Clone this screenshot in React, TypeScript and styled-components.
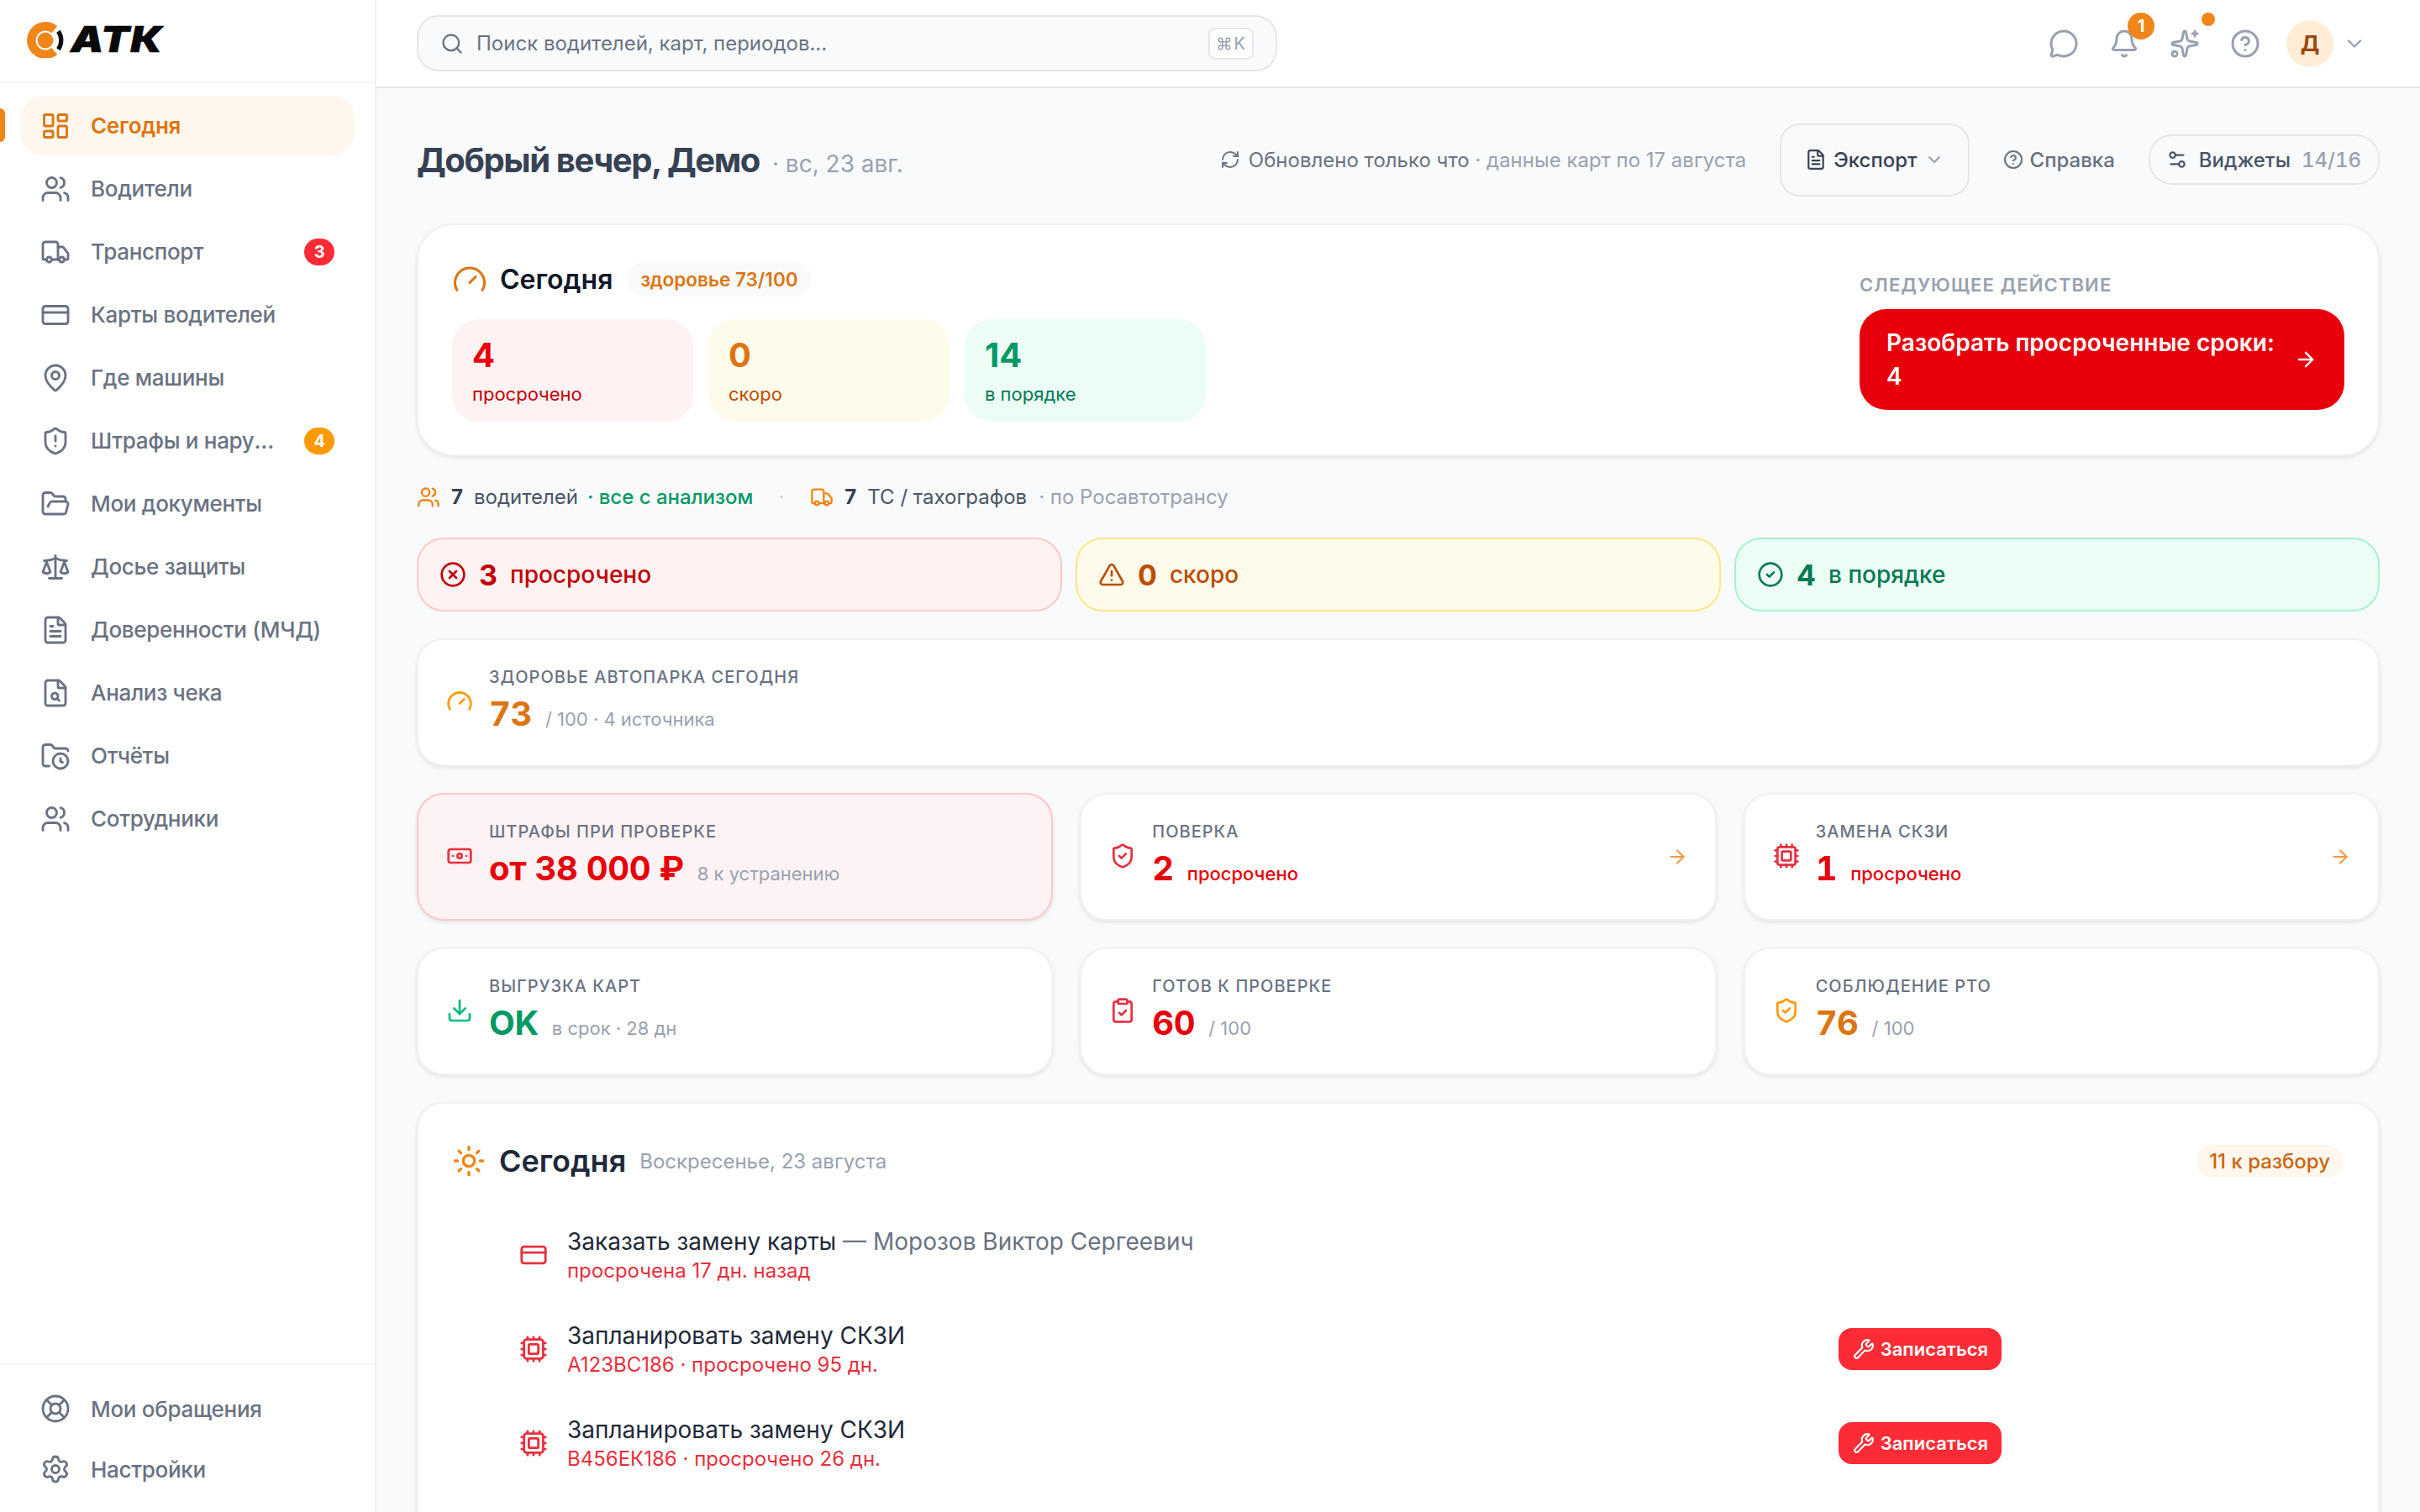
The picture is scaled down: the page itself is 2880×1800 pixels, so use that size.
import React from 'react';
import styled, { createGlobalStyle } from 'styled-components';
import {
  ArrowRight,
  Banknote,
  Bell,
  ChevronDown,
  CircleCheck,
  CircleHelp,
  CircleX,
  ClipboardCheck,
  Command,
  Cpu,
  CreditCard,
  Download,
  FileSearch,
  FileText,
  FolderClock,
  FolderOpen,
  Gauge,
  LayoutDashboard,
  LifeBuoy,
  MapPin,
  MessageCircle,
  RefreshCw,
  Scale,
  Search,
  Settings,
  Settings2,
  ShieldAlert,
  ShieldCheck,
  Sparkles,
  Sun,
  TriangleAlert,
  Truck,
  Users,
  Wrench,
} from 'lucide-react';

const GlobalStyle = createGlobalStyle`
  * { box-sizing: border-box; }
  html, body { margin: 0; height: 100%; overflow: hidden; }
  body { font-family: Inter, "Liberation Sans", sans-serif; background: #f9fafb; color: #101828; }
  #root { height: 100%; }
`;

const Shell = styled.div`
  display: flex;
  height: 1800px;
  overflow: hidden;
`;

const Sidebar = styled.aside`
  flex: 0 0 448px;
  width: 448px;
  min-width: 0;
  display: flex;
  flex-direction: column;
  background: #fff;
  border-right: 2px solid #eceef1;
`;

const LogoRow = styled.div`
  height: 99px;
  display: flex;
  align-items: center;
  gap: 8px;
  padding: 0 0 3px 32px;
  border-bottom: 2px solid #f5f6f7;
`;

const LogoText = styled.span`
  font-family: Inter, sans-serif;
  font-size: 42px;
  line-height: 1;
  font-weight: 900;
  font-style: italic;
  color: #0a0a0a;
  letter-spacing: 1px;
  transform: scaleX(1.18);
  transform-origin: left center;
  -webkit-text-stroke: 0.6px #0a0a0a;
`;

const Nav = styled.nav`
  display: flex;
  flex-direction: column;
  gap: 4px;
  padding: 15px 24px 0;
`;

const NavItem = styled.div<{ $active?: boolean }>`
  position: relative;
  height: 71px;
  display: flex;
  align-items: center;
  gap: 24px;
  padding: 0 24px;
  border-radius: 28px;
  font-size: 26px;
  letter-spacing: -0.3px;
  font-weight: ${(p) => (p.$active ? 600 : 500)};
  color: ${(p) => (p.$active ? '#dc7512' : '#6a7282')};
  background: ${(p) => (p.$active ? '#fef7ed' : 'transparent')};
  svg { flex: 0 0 36px; }
`;

const ActiveMark = styled.span`
  position: absolute;
  left: -24px;
  top: 15px;
  width: 6px;
  height: 40px;
  border-radius: 0 6px 6px 0;
  background: #f08519;
`;

const NavLabel = styled.span`
  flex: 1;
  min-width: 0;
  white-space: nowrap;
  overflow: hidden;
  text-overflow: ellipsis;
`;

const NavBadge = styled.span<{ $tone: 'red' | 'amber' }>`
  flex: 0 0 36px;
  height: 32px;
  border-radius: 16px;
  display: flex;
  align-items: center;
  justify-content: center;
  font-size: 20px;
  font-weight: 700;
  color: #fff;
  background: ${(p) => (p.$tone === 'red' ? '#fb2c36' : '#fe9a00')};
`;

const SideFooter = styled.div`
  margin-top: auto;
  display: flex;
  flex-direction: column;
  gap: 4px;
  padding: 18px 24px 17px;
  border-top: 2px solid #f5f6f7;
`;

const FooterItem = styled(NavItem)`
  height: 68px;
`;

const Column = styled.div`
  flex: 1;
  min-width: 0;
  display: flex;
  flex-direction: column;
`;

const Topbar = styled.header`
  flex: 0 0 105px;
  display: flex;
  align-items: center;
  padding: 0 64px 0 48px;
  background: #fff;
  border-bottom: 2px solid #e5e7eb;
`;

const SearchBox = styled.div`
  width: 1024px;
  height: 67px;
  display: flex;
  align-items: center;
  gap: 15px;
  padding: 0 26px;
  border: 2px solid #e5e7eb;
  border-radius: 26px;
  background: #f9fafb;
  color: #6a7282;
  font-size: 24px;
`;

const SearchHint = styled.span`
  flex: 1;
`;

const Kbd = styled.kbd`
  display: flex;
  align-items: center;
  gap: 3px;
  height: 38px;
  padding: 0 8px;
  border: 2px solid #e5e7eb;
  border-radius: 8px;
  background: #fff;
  color: #99a1af;
  font-family: Inter, sans-serif;
  font-size: 20px;
`;

const TopIcons = styled.div`
  margin-left: auto;
  display: flex;
  align-items: center;
`;

const TopIcon = styled.span`
  position: relative;
  width: 72px;
  height: 56px;
  display: flex;
  align-items: center;
  justify-content: center;
  color: #99a1af;
`;

const CountDot = styled.span`
  position: absolute;
  left: 40px;
  top: -9px;
  width: 32px;
  height: 32px;
  border-radius: 50%;
  display: flex;
  align-items: center;
  justify-content: center;
  background: #f08519;
  color: #fff;
  font-size: 20px;
  font-weight: 700;
`;

const PlainDot = styled.span`
  position: absolute;
  left: 56px;
  top: -9px;
  width: 16px;
  height: 16px;
  border-radius: 50%;
  background: #f08519;
`;

const Avatar = styled.span`
  width: 56px;
  height: 56px;
  margin: 0 11px 0 13px;
  border-radius: 50%;
  display: flex;
  align-items: center;
  justify-content: center;
  background: #ffedd5;
  color: #974a0f;
  font-size: 26px;
  font-weight: 700;
`;

const Content = styled.main`
  flex: 1;
  min-height: 0;
  overflow: hidden;
  display: flex;
  flex-direction: column;
  gap: 32px;
  padding: 42px 48px 0;
  > * { flex: 0 0 auto; }
`;

const PageHead = styled.div`
  height: 86px;
  margin-bottom: 1px;
  display: flex;
  align-items: center;
  gap: 40px;
`;

const Greeting = styled.div`
  margin-right: auto;
  display: flex;
  align-items: baseline;
  gap: 15px;
`;

const Title = styled.h1`
  margin: 0;
  font-size: 40px;
  font-weight: 700;
  color: #364153;
  letter-spacing: -1.4px;
`;

const Muted = styled.span`
  color: #99a1af;
`;

const DateText = styled(Muted)`
  font-size: 28px;
`;

const Updated = styled.div`
  display: flex;
  align-items: center;
  gap: 10px;
  font-size: 24px;
  color: #6a7282;
  white-space: nowrap;
`;

const ExportButton = styled.div`
  height: 87px;
  padding: 0 28px;
  display: flex;
  align-items: center;
  gap: 8px;
  border: 2px solid #e5e7eb;
  border-radius: 24px;
  font-size: 24px;
  font-weight: 500;
  color: #364153;
`;

const HelpLink = styled.div`
  display: flex;
  align-items: center;
  gap: 8px;
  font-size: 24px;
  font-weight: 500;
  color: #6a7282;
`;

const WidgetsButton = styled.div`
  height: 60px;
  padding: 0 20px 0 19px;
  display: flex;
  align-items: center;
  gap: 13px;
  border: 2px solid #e5e7eb;
  border-radius: 28px;
  font-size: 24px;
  font-weight: 500;
  color: #4a5565;
  font-variant-numeric: tabular-nums;
`;

const Card = styled.section<{ $danger?: boolean }>`
  border: 2px solid ${(p) => (p.$danger ? '#ffc9c9' : '#f1f2f4')};
  background: ${(p) => (p.$danger ? '#fdf3f4' : '#fff')};
  border-radius: 32px;
  box-shadow: 0 2px 5px rgba(16, 24, 40, 0.1);
`;

const Hero = styled(Card)`
  height: 277px;
  border-radius: 44px;
  padding: 5px 40px 0;
  display: flex;
  align-items: center;
  justify-content: space-between;
`;

const HeroLeft = styled.div`
  display: flex;
  flex-direction: column;
  gap: 27px;
`;

const HeroHead = styled.div`
  display: flex;
  align-items: center;
  gap: 15px;
  height: 41px;
`;

const HeroTitle = styled.span`
  font-size: 32px;
  font-weight: 600;
  color: #101828;
`;

const HealthPill = styled.span`
  height: 41px;
  padding: 0 16px;
  margin-left: 2px;
  display: flex;
  align-items: center;
  border-radius: 20px;
  background: #f9fafb;
  color: #dc7512;
  font-size: 22.5px;
  font-weight: 600;
`;

const Tiles = styled.div`
  display: flex;
  gap: 18px;
`;

const tileColors = {
  red: { bg: '#fef2f2', num: '#e7000b', text: '#c10007' },
  amber: { bg: '#fffbeb', num: '#dc7512', text: '#bb4d00' },
  green: { bg: '#ecfdf5', num: '#009966', text: '#007a55' },
};

type Tone = keyof typeof tileColors;

const Tile = styled.div<{ $tone: Tone }>`
  width: 287px;
  height: 122px;
  padding: 19px 24px 0;
  border-radius: 32px;
  background: ${(p) => tileColors[p.$tone].bg};
`;

const TileNum = styled.div<{ $tone: Tone }>`
  font-size: 40px;
  line-height: 48px;
  font-weight: 700;
  color: ${(p) => tileColors[p.$tone].num};
`;

const TileLabel = styled.div<{ $tone: Tone }>`
  margin-top: 6px;
  font-size: 22px;
  line-height: 32px;
  color: ${(p) => tileColors[p.$tone].text};
`;

const NextAction = styled.div`
  width: 577px;
  margin-top: -3px;
  display: flex;
  flex-direction: column;
  gap: 14px;
`;

const NextLabel = styled.div`
  font-size: 22px;
  line-height: 30px;
  font-weight: 600;
  color: #99a1af;
  letter-spacing: 1.1px;
`;

const NextButton = styled.div`
  height: 120px;
  padding: 0 32px;
  display: flex;
  align-items: center;
  gap: 16px;
  border-radius: 32px;
  background: #e7000b;
  color: #fff;
  font-size: 28px;
  line-height: 40px;
  font-weight: 600;
`;

const NextText = styled.span`
  flex: 1;
`;

const StatLine = styled.div`
  height: 33px;
  display: flex;
  align-items: center;
  font-size: 24px;
  color: #4a5565;
  white-space: nowrap;
`;

const StatNum = styled.b`
  margin: 0 13px;
  color: #364153;
  font-weight: 700;
`;

const StatGreen = styled.span`
  margin-left: 11px;
  color: #009966;
  font-weight: 500;
`;

const StatMuted = styled(Muted)`
  margin-left: 14px;
`;

const StatSep = styled(Muted)`
  margin: 0 31px 0 30px;
  color: #d1d5dc;
`;

const Alerts = styled.div`
  display: grid;
  grid-template-columns: repeat(3, 1fr);
  gap: 16px;
`;

const alertColors = {
  red: { bg: '#fef2f2', border: '#ffc9c9', text: '#c10007' },
  amber: { bg: '#fffbeb', border: '#fee685', text: '#bb4d00' },
  green: { bg: '#ecfdf5', border: '#a4f4cf', text: '#007a55' },
};

const Alert = styled.div<{ $tone: Tone }>`
  height: 88px;
  padding: 0 25px;
  display: flex;
  align-items: center;
  gap: 15px;
  border: 2px solid ${(p) => alertColors[p.$tone].border};
  border-radius: 32px;
  background: ${(p) => alertColors[p.$tone].bg};
  color: ${(p) => alertColors[p.$tone].text};
  font-size: 28px;
  font-weight: 500;
`;

const AlertNum = styled.b`
  font-size: 34px;
  font-weight: 700;
`;

const MetricCard = styled(Card)`
  height: 152px;
  padding: 29px 32px 0;
  display: flex;
  align-items: flex-start;
  gap: 18px;
`;

const MetricIcon = styled.span<{ $color: string }>`
  flex: 0 0 34px;
  height: 36px;
  margin-top: 26px;
  display: flex;
  align-items: center;
  justify-content: center;
  color: ${(p) => p.$color};
`;

const MetricBody = styled.div`
  flex: 1;
  min-width: 0;
`;

const MetricLabel = styled.div`
  font-size: 20px;
  line-height: 30px;
  font-weight: 500;
  letter-spacing: 1px;
  color: #6a7282;
`;

const MetricValueRow = styled.div`
  margin-top: 6px;
  height: 46px;
  display: flex;
  align-items: baseline;
  gap: 16px;
`;

const MetricValue = styled.span<{ $color: string }>`
  font-size: 40px;
  line-height: 46px;
  font-weight: 700;
  letter-spacing: -0.4px;
  font-variant-numeric: tabular-nums;
  color: ${(p) => p.$color};
`;

const MetricNote = styled.span<{ $color?: string; $bold?: boolean }>`
  font-size: 22px;
  font-weight: ${(p) => (p.$bold ? 500 : 400)};
  color: ${(p) => p.$color || '#99a1af'};
`;

const MetricArrow = styled.span`
  align-self: center;
  margin: -30px 0 0 0;
  color: #f29b47;
  display: flex;
`;

const MetricGrid = styled.div`
  display: grid;
  grid-template-columns: repeat(3, 1fr);
  gap: 32px;
`;

const TodayCard = styled(Card)`
  padding: 44px 42px 200px 40px;
`;

const TodayHead = styled.div`
  height: 48px;
  display: flex;
  align-items: center;
  gap: 16px;
`;

const TodayTitle = styled.span`
  font-size: 36px;
  font-weight: 600;
  color: #1e2939;
`;

const TodayDate = styled(Muted)`
  font-size: 24px;
`;

const ReviewPill = styled.span`
  margin-left: auto;
  height: 39px;
  padding: 0 15px;
  display: flex;
  align-items: center;
  border-radius: 20px;
  background: #fef7ed;
  color: #ca6510;
  font-size: 24px;
  font-weight: 500;
`;

const TaskList = styled.div`
  margin-top: 32px;
  padding: 0 406px 0 80px;
`;

const Task = styled.div`
  height: 112px;
  display: flex;
  align-items: center;
  gap: 23px;
`;

const TaskIcon = styled.span`
  flex: 0 0 32px;
  display: flex;
  justify-content: center;
  color: #e7303e;
`;

const TaskBody = styled.div`
  flex: 1;
`;

const TaskTitle = styled.div`
  font-size: 28px;
  line-height: 38px;
  color: #1e2939;
`;

const TaskWho = styled.span`
  color: #6a7282;
`;

const TaskSub = styled.div`
  margin-top: -1px;
  font-size: 24px;
  line-height: 34px;
  color: #e7303e;
`;

const SignUp = styled.div`
  height: 50px;
  padding: 0 16px 0 17px;
  display: flex;
  align-items: center;
  gap: 7px;
  border-radius: 16px;
  background: #fb2c36;
  color: #fff;
  font-size: 22px;
  font-weight: 600;
`;

const AtkMark = () => (
  <svg width="44" height="44" viewBox="1 -1 42 42" fill="none">
    <path d="M32.3 8.7A16 16 0 1 0 32.3 33.3" stroke="#f08519" strokeWidth="10" />
    <path d="M36.7 10.7A18 18 0 0 1 36.7 31.3" stroke="#0a0a0a" strokeWidth="5" />
    <circle cx="22" cy="21" r="9" fill="#f08519" />
  </svg>
);

const navItems = [
  { icon: LayoutDashboard, label: 'Сегодня', active: true },
  { icon: Users, label: 'Водители' },
  { icon: Truck, label: 'Транспорт', badge: '3', tone: 'red' as const },
  { icon: CreditCard, label: 'Карты водителей' },
  { icon: MapPin, label: 'Где машины' },
  { icon: ShieldAlert, label: 'Штрафы и нарушения', badge: '4', tone: 'amber' as const },
  { icon: FolderOpen, label: 'Мои документы' },
  { icon: Scale, label: 'Досье защиты' },
  { icon: FileText, label: 'Доверенности (МЧД)' },
  { icon: FileSearch, label: 'Анализ чека' },
  { icon: FolderClock, label: 'Отчёты' },
  { icon: Users, label: 'Сотрудники' },
];

const RED = '#e7000b';
const AMBER = '#dc7512';
const GREEN = '#009966';

const metrics = [
  { icon: Banknote, iconColor: '#e7303e', label: 'ШТРАФЫ ПРИ ПРОВЕРКЕ', value: 'от 38 000 ₽', color: RED, note: '8 к устранению', danger: true },
  { icon: ShieldCheck, iconColor: '#e7303e', label: 'ПОВЕРКА', value: '2', color: RED, note: 'просрочено', noteColor: RED, arrow: true },
  { icon: Cpu, iconColor: '#e7303e', label: 'ЗАМЕНА СКЗИ', value: '1', color: RED, note: 'просрочено', noteColor: RED, arrow: true },
  { icon: Download, iconColor: '#00bc7d', label: 'ВЫГРУЗКА КАРТ', value: 'OK', color: GREEN, note: 'в срок · 28 дн' },
  { icon: ClipboardCheck, iconColor: '#e7303e', label: 'ГОТОВ К ПРОВЕРКЕ', value: '60', color: RED, note: '/ 100' },
  { icon: ShieldCheck, iconColor: '#fe9a00', label: 'СОБЛЮДЕНИЕ РТО', value: '76', color: AMBER, note: '/ 100' },
];

const tasks = [
  { icon: CreditCard, title: 'Заказать замену карты', who: ' — Морозов Виктор Сергеевич', sub: 'просрочена 17 дн. назад' },
  { icon: Cpu, title: 'Запланировать замену СКЗИ', sub: 'А123ВС186 · просрочено 95 дн.', action: true },
  { icon: Cpu, title: 'Запланировать замену СКЗИ', sub: 'В456ЕК186 · просрочено 26 дн.', action: true },
];

export default function App() {
  return (
    <Shell>
      <GlobalStyle />
      <Sidebar>
        <LogoRow>
          <AtkMark />
          <LogoText>АТК</LogoText>
        </LogoRow>
        <Nav>
          {navItems.map((item) => (
            <NavItem key={item.label} $active={item.active}>
              {item.active && <ActiveMark />}
              <item.icon size={36} strokeWidth={1.9} />
              <NavLabel>{item.label}</NavLabel>
              {item.badge && <NavBadge $tone={item.tone}>{item.badge}</NavBadge>}
            </NavItem>
          ))}
        </Nav>
        <SideFooter>
          <FooterItem>
            <LifeBuoy size={36} strokeWidth={1.9} />
            <NavLabel>Мои обращения</NavLabel>
          </FooterItem>
          <FooterItem>
            <Settings size={36} strokeWidth={1.9} />
            <NavLabel>Настройки</NavLabel>
          </FooterItem>
        </SideFooter>
      </Sidebar>

      <Column>
        <Topbar>
          <SearchBox>
            <Search size={28} strokeWidth={2} />
            <SearchHint>Поиск водителей, карт, периодов...</SearchHint>
            <Kbd>
              <Command size={18} strokeWidth={2} />K
            </Kbd>
          </SearchBox>
          <TopIcons>
            <TopIcon>
              <MessageCircle size={36} strokeWidth={2} />
            </TopIcon>
            <TopIcon>
              <Bell size={36} strokeWidth={2} />
              <CountDot>1</CountDot>
            </TopIcon>
            <TopIcon>
              <Sparkles size={36} strokeWidth={2} />
              <PlainDot />
            </TopIcon>
            <TopIcon>
              <CircleHelp size={36} strokeWidth={2} />
            </TopIcon>
            <Avatar>Д</Avatar>
            <ChevronDown size={28} color="#99a1af" strokeWidth={2} />
          </TopIcons>
        </Topbar>

        <Content>
          <PageHead>
            <Greeting>
              <Title>Добрый вечер, Демо</Title>
              <DateText>· вс, 23 авг.</DateText>
            </Greeting>
            <Updated>
              <RefreshCw size={24} strokeWidth={2} />
              <span>
                Обновлено только что <Muted>· данные карт по 17 августа</Muted>
              </span>
            </Updated>
            <ExportButton>
              <FileText size={26} strokeWidth={2} />
              Экспорт
              <ChevronDown size={24} color="#99a1af" strokeWidth={2} />
            </ExportButton>
            <HelpLink>
              <CircleHelp size={24} strokeWidth={2} />
              Справка
            </HelpLink>
            <WidgetsButton>
              <Settings2 size={26} strokeWidth={2} />
              Виджеты <Muted>14/16</Muted>
            </WidgetsButton>
          </PageHead>

          <Hero>
            <HeroLeft>
              <HeroHead>
                <Gauge size={42} color="#dc7512" strokeWidth={1.8} />
                <HeroTitle>Сегодня</HeroTitle>
                <HealthPill>здоровье 73/100</HealthPill>
              </HeroHead>
              <Tiles>
                <Tile $tone="red">
                  <TileNum $tone="red">4</TileNum>
                  <TileLabel $tone="red">просрочено</TileLabel>
                </Tile>
                <Tile $tone="amber">
                  <TileNum $tone="amber">0</TileNum>
                  <TileLabel $tone="amber">скоро</TileLabel>
                </Tile>
                <Tile $tone="green">
                  <TileNum $tone="green">14</TileNum>
                  <TileLabel $tone="green">в порядке</TileLabel>
                </Tile>
              </Tiles>
            </HeroLeft>
            <NextAction>
              <NextLabel>СЛЕДУЮЩЕЕ ДЕЙСТВИЕ</NextLabel>
              <NextButton>
                <NextText>Разобрать просроченные сроки: 4</NextText>
                <ArrowRight size={28} strokeWidth={2} />
              </NextButton>
            </NextAction>
          </Hero>

          <StatLine>
            <Users size={28} color="#f08519" strokeWidth={2} />
            <StatNum>7</StatNum>
            водителей
            <StatGreen>· все с анализом</StatGreen>
            <StatSep>·</StatSep>
            <Truck size={28} color="#f08519" strokeWidth={2} />
            <StatNum>7</StatNum>
            ТС / тахографов
            <StatMuted>· по Росавтотрансу</StatMuted>
          </StatLine>

          <Alerts>
            <Alert $tone="red">
              <CircleX size={32} strokeWidth={2} />
              <AlertNum>3</AlertNum>
              просрочено
            </Alert>
            <Alert $tone="amber">
              <TriangleAlert size={32} strokeWidth={2} />
              <AlertNum>0</AlertNum>
              скоро
            </Alert>
            <Alert $tone="green">
              <CircleCheck size={32} strokeWidth={2} />
              <AlertNum>4</AlertNum>
              в порядке
            </Alert>
          </Alerts>

          <MetricCard>
            <MetricIcon $color="#fe9a00">
              <Gauge size={32} strokeWidth={2} />
            </MetricIcon>
            <MetricBody>
              <MetricLabel>ЗДОРОВЬЕ АВТОПАРКА СЕГОДНЯ</MetricLabel>
              <MetricValueRow>
                <MetricValue $color={AMBER}>73</MetricValue>
                <MetricNote>/ 100 · 4 источника</MetricNote>
              </MetricValueRow>
            </MetricBody>
          </MetricCard>

          <MetricGrid>
            {metrics.map((m) => (
              <MetricCard key={m.label} $danger={m.danger}>
                <MetricIcon $color={m.iconColor}>
                  <m.icon size={32} strokeWidth={2} />
                </MetricIcon>
                <MetricBody>
                  <MetricLabel>{m.label}</MetricLabel>
                  <MetricValueRow>
                    <MetricValue $color={m.color}>{m.value}</MetricValue>
                    <MetricNote $color={m.noteColor} $bold={!!m.noteColor}>
                      {m.note}
                    </MetricNote>
                  </MetricValueRow>
                </MetricBody>
                {m.arrow && (
                  <MetricArrow>
                    <ArrowRight size={26} strokeWidth={2} />
                  </MetricArrow>
                )}
              </MetricCard>
            ))}
          </MetricGrid>

          <TodayCard>
            <TodayHead>
              <Sun size={40} color="#f08519" strokeWidth={2} />
              <TodayTitle>Сегодня</TodayTitle>
              <TodayDate>Воскресенье, 23 августа</TodayDate>
              <ReviewPill>11 к разбору</ReviewPill>
            </TodayHead>
            <TaskList>
              {tasks.map((t) => (
                <Task key={t.sub}>
                  <TaskIcon>
                    <t.icon size={34} strokeWidth={2} />
                  </TaskIcon>
                  <TaskBody>
                    <TaskTitle>
                      {t.title}
                      {t.who && <TaskWho>{t.who}</TaskWho>}
                    </TaskTitle>
                    <TaskSub>{t.sub}</TaskSub>
                  </TaskBody>
                  {t.action && (
                    <SignUp>
                      <Wrench size={26} strokeWidth={2} />
                      Записаться
                    </SignUp>
                  )}
                </Task>
              ))}
            </TaskList>
          </TodayCard>
        </Content>
      </Column>
    </Shell>
  );
}
